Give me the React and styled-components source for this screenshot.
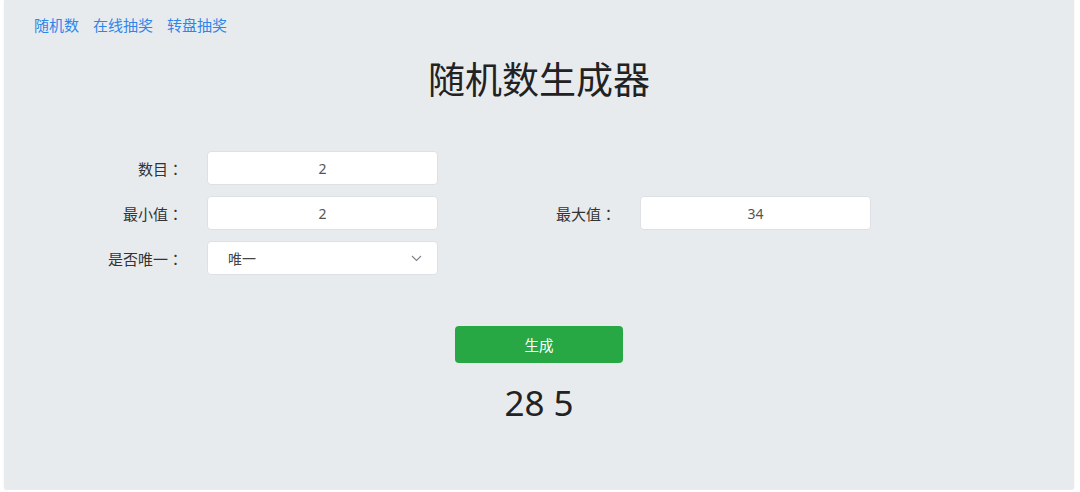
import React, { useState } from "react";
import styled, { createGlobalStyle } from "styled-components";

const GlobalStyle = createGlobalStyle`
  body {
    margin: 0;
    background: #ffffff;
    font-family: "Noto Sans", "Noto Sans CJK SC", sans-serif;
  }
`;

const Panel = styled.div`
  margin: 0 6px 0 4px;
  height: 490px;
  box-sizing: border-box;
  background: #e8ebee;
  border-radius: 0 0 4px 4px;
  box-shadow: 0 1px 2px rgba(0, 0, 0, 0.08);
  padding-top: 15px;
  display: flex;
  flex-direction: column;
`;

const Nav = styled.nav`
  display: flex;
  gap: 14px;
  padding-left: 30px;
  line-height: 20px;
`;

const NavLink = styled.a`
  color: #2f86ea;
  font-size: 15px;
  text-decoration: none;
  cursor: pointer;
`;

const Title = styled.h1`
  margin: 23px 0 0;
  text-align: center;
  font-size: 37px;
  line-height: 44px;
  font-weight: 400;
  color: #222;
`;

const Form = styled.div`
  margin-top: 49px;
  padding-left: 17px;
  display: flex;
  flex-direction: column;
  gap: 11px;
`;

const Row = styled.div`
  display: flex;
`;

const Field = styled.div`
  width: 433px;
  display: flex;
  align-items: center;
`;

const Label = styled.label`
  width: 162px;
  margin-right: 24px;
  text-align: right;
  font-size: 15px;
  color: #333;
`;

const Colon = styled.span`
  font-family: "Noto Sans CJK TC", sans-serif;
`;

const Input = styled.input`
  width: 231px;
  height: 34px;
  box-sizing: border-box;
  border: 1px solid #dde1e6;
  border-radius: 4px;
  background: #fff;
  text-align: center;
  font-family: inherit;
  font-size: 14px;
  color: #555;
  outline: none;
`;

const SelectBox = styled.div`
  width: 231px;
  height: 34px;
  box-sizing: border-box;
  border: 1px solid #dde1e6;
  border-radius: 4px;
  background: #fff;
  padding: 0 15px 0 20px;
  display: flex;
  align-items: center;
  justify-content: space-between;
  font-size: 14px;
  color: #444;
`;

const Actions = styled.div`
  margin-top: 51px;
  display: flex;
  justify-content: center;
`;

const Button = styled.button`
  width: 168px;
  height: 37px;
  border: none;
  border-radius: 4px;
  background: #28a745;
  color: #fff;
  font-family: inherit;
  font-size: 14.5px;
  cursor: pointer;
`;

const Result = styled.div`
  margin-top: 20px;
  text-align: center;
  font-size: 35px;
  line-height: 40px;
  color: #222;
`;

function Chevron() {
  return (
    <svg width="11" height="7" viewBox="0 0 11 7" fill="none">
      <path d="M1 1l4.5 4.5L10 1" stroke="#7d838a" strokeWidth="1.1" />
    </svg>
  );
}

function FormField({ label, children }) {
  return (
    <Field>
      <Label>
        {label}
        <Colon>：</Colon>
      </Label>
      {children}
    </Field>
  );
}

export default function App() {
  const [count, setCount] = useState("2");
  const [min, setMin] = useState("2");
  const [max, setMax] = useState("34");

  return (
    <>
      <GlobalStyle />
      <Panel>
        <Nav>
          <NavLink>随机数</NavLink>
          <NavLink>在线抽奖</NavLink>
          <NavLink>转盘抽奖</NavLink>
        </Nav>
        <Title>随机数生成器</Title>
        <Form>
          <Row>
            <FormField label="数目">
              <Input value={count} onChange={(e) => setCount(e.target.value)} />
            </FormField>
          </Row>
          <Row>
            <FormField label="最小值">
              <Input value={min} onChange={(e) => setMin(e.target.value)} />
            </FormField>
            <FormField label="最大值">
              <Input value={max} onChange={(e) => setMax(e.target.value)} />
            </FormField>
          </Row>
          <Row>
            <FormField label="是否唯一">
              <SelectBox>
                <span>唯一</span>
                <Chevron />
              </SelectBox>
            </FormField>
          </Row>
        </Form>
        <Actions>
          <Button>生成</Button>
        </Actions>
        <Result>28 5</Result>
      </Panel>
    </>
  );
}
